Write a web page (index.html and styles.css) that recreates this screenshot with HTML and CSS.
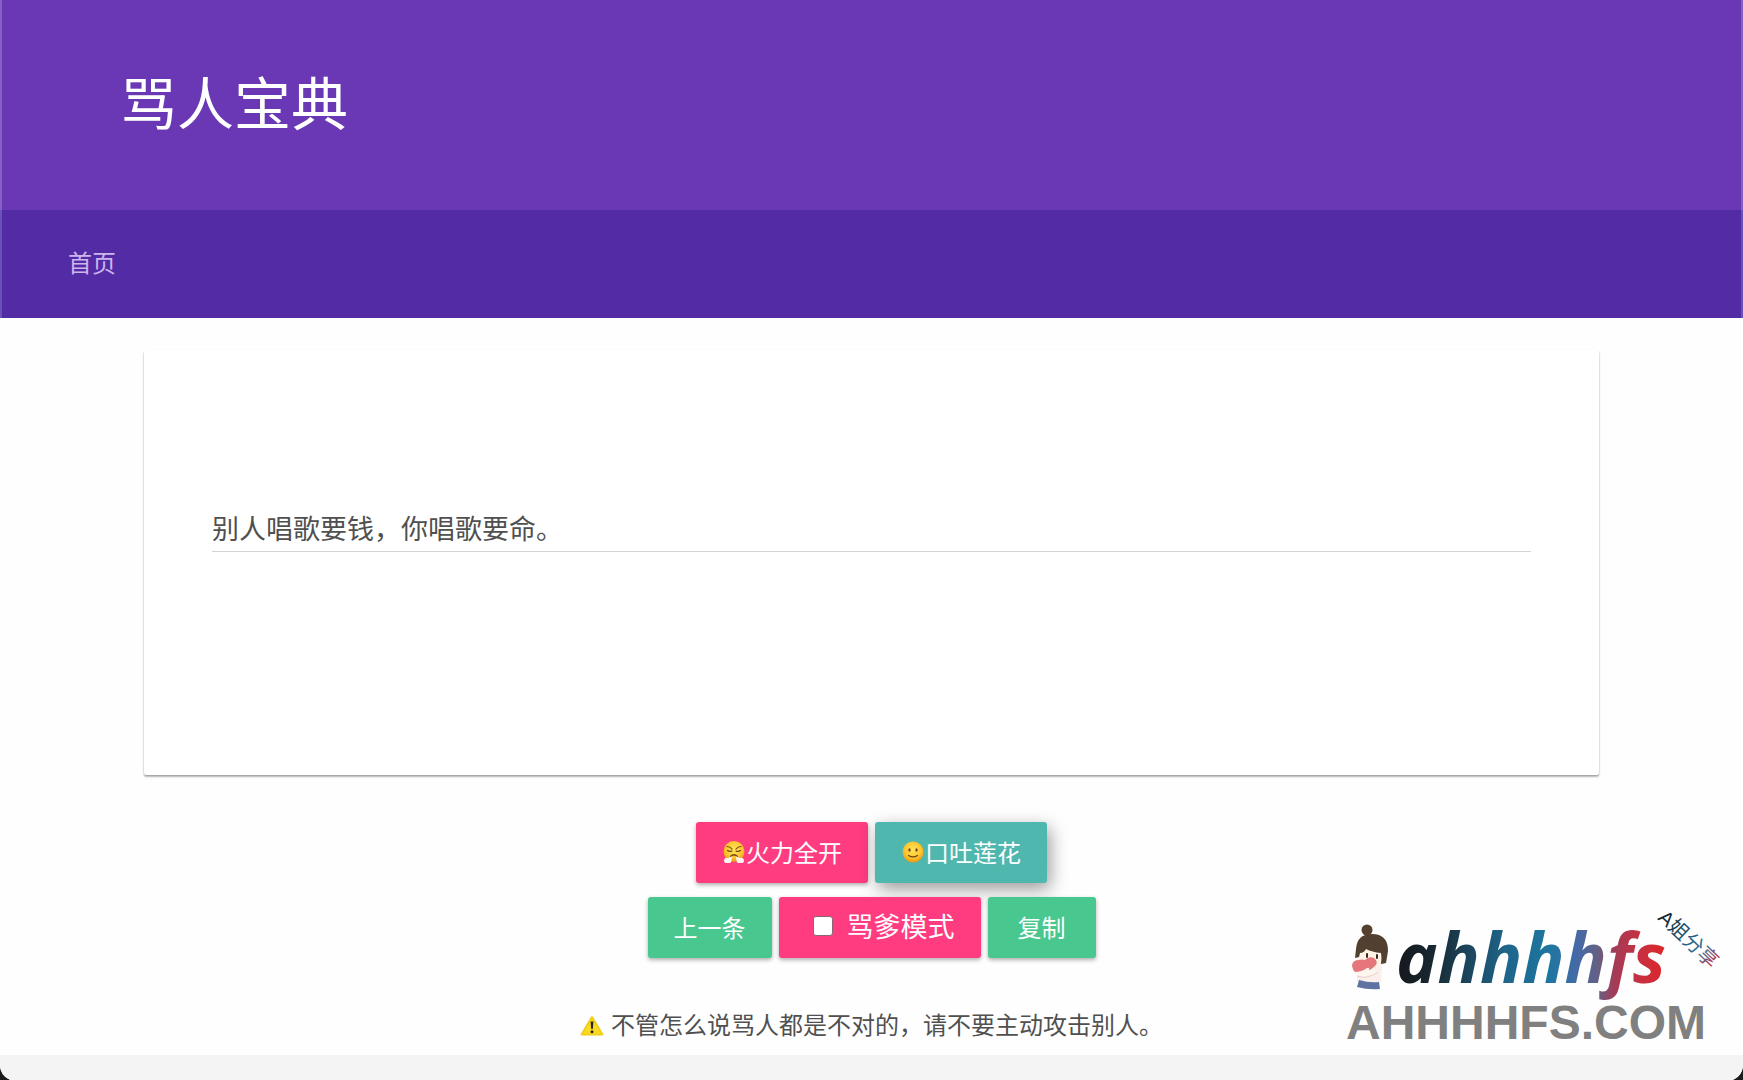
FILE: index.html
```html
<!DOCTYPE html>
<html lang="zh-CN">
<head>
<meta charset="utf-8">
<meta name="viewport" content="width=device-width, initial-scale=1">
<title>骂人宝典</title>
<link rel="stylesheet" href="styles.css">
</head>
<body>
<div class="window">
  <header class="banner">
    <h1 class="banner-title">骂人宝典</h1>
  </header>
  <nav class="nav">
    <a class="nav-link" href="#">首页</a>
  </nav>
  <main class="main">
    <section class="card">
      <input class="sentence" type="text" aria-label="句子" value="别人唱歌要钱，你唱歌要命。" readonly>
    </section>
    <div class="actions">
      <div class="row">
        <button class="btn btn-pink" type="button">
          <svg class="emoji" viewBox="0 0 24 24" aria-hidden="true">
            <defs><radialGradient id="face" cx=".5" cy=".4" r=".6"><stop offset="0" stop-color="#ffe45a"/><stop offset=".65" stop-color="#fcc630"/><stop offset="1" stop-color="#ee9410"/></radialGradient></defs>
            <circle cx="12" cy="11.5" r="10.5" fill="url(#face)"/>
            <path d="M5 6.5q3 0 5 2.500M19 6.500q-3 0-5 2.500M5.500 10.500q2 1.600 4.500.500M18.500 10.500q-2 1.600-4.500.500M8.500 16.500q3.500-3.500 7 0" fill="none" stroke="#714313" stroke-width="1.200" stroke-linecap="round"/>
            <path d="M10 16.500q-2 0-3.500 1.500-4-1-4.500 2.500 0 3 3.500 2.500 4 .5 4-2.500zM14 16.500q2 0 3.500 1.500 4-1 4.500 2.500 0 3-3.500 2.500-4 .5-4-2.500z" fill="#fff4f2"/>
          </svg>火力全开</button>
        <button class="btn btn-teal" type="button">
          <svg class="emoji" viewBox="0 0 24 24" aria-hidden="true">
            <circle cx="12" cy="12" r="10.500" fill="url(#face)"/>
            <ellipse cx="8.500" cy="10" rx="1.200" ry="1.700" fill="#714313"/>
            <ellipse cx="15.500" cy="10" rx="1.200" ry="1.700" fill="#714313"/>
            <path d="M7.500 15.500q4.500 2.800 9 0" fill="none" stroke="#714313" stroke-width="1.300" stroke-linecap="round"/>
          </svg>口吐莲花</button>
      </div>
      <div class="row">
        <button class="btn btn-green" type="button">上一条</button>
        <label class="btn btn-pink btn-mode"><input class="check" type="checkbox">骂爹模式</label>
        <button class="btn btn-green" type="button">复制</button>
      </div>
    </div>
    <p class="notice">
      <svg class="warn" viewBox="0 0 24 24" aria-hidden="true">
        <path d="M12 3 22.500 20.500H1.500z" fill="#fadb22" stroke="#f0cf1c" stroke-width="2" stroke-linejoin="round"/>
        <path d="M10.600 7.500h2.800l-.6 7.500h-1.600z" fill="#29241a"/>
        <circle cx="12" cy="17.800" r="1.500" fill="#29241a"/>
      </svg>不管怎么说骂人都是不对的，请不要主动攻击别人。</p>
  </main>
  <footer class="footer"></footer>
  <svg class="brand" viewBox="0 0 390 150" role="img" aria-label="ahhhhfs A姐分享">
    <defs>
      <linearGradient id="ink" gradientUnits="userSpaceOnUse" x1="58" y1="0" x2="325" y2="0">
        <stop offset="0" stop-color="#14181d"/><stop offset=".12" stop-color="#18262f"/>
        <stop offset=".24" stop-color="#1b4054"/><stop offset=".4" stop-color="#1f6489"/>
        <stop offset=".56" stop-color="#1c76a0"/><stop offset=".68" stop-color="#4869a5"/>
        <stop offset=".75" stop-color="#665f82"/><stop offset=".81" stop-color="#a43b56"/>
        <stop offset=".9" stop-color="#c53143"/><stop offset="1" stop-color="#df2528"/>
      </linearGradient>
      <linearGradient id="tag" x1="0" x2="1"><stop offset="0" stop-color="#141e25"/><stop offset=".5" stop-color="#216080"/><stop offset=".75" stop-color="#377297"/><stop offset="1" stop-color="#c52e3c"/></linearGradient>
    </defs>
    <g>
      <circle cx="27" cy="29" r="5.500" fill="#55402d"/>
      <path d="M17 48q0-14 15-14 15 0 15 15l-2 13q-2 3-5 2H20q-5-6-3-16z" fill="#fff1e4"/>
      <path d="M16 48q1-15 16-15 16 0 16 17l-2 12-5 1q1-6 0-11-9-1-15-4-2 4-6 4l-1 4-4 1z" fill="#514030"/>
      <path d="M27 53v3M37 54v3" stroke="#332820" stroke-width="2" stroke-linecap="round"/>
      <path d="M17 64q15-5 25 2l-1 15H17z" fill="#fbefec"/>
      <path d="M17 73q-5-4-5-9 1-5 7-5 3-1 6 0 4-4 9-2 5 4 1 8-6 6-18 8z" fill="#e4767c"/>
      <path d="M14 71q8 0 13-4 3-1 2 2l9 1q-4 7-14 7-8-1-10-6z" fill="#fff5ef"/>
      <path d="M17 75q10 4 21-4" fill="none" stroke="#e9cec7"/>
      <path d="M19 79q10 3 20 2l1 7q-12 1-23-2z" fill="#5e73a2"/>
    </g>
    <text class="brand-script" x="56" y="82">ahhhhfs</text>
    <text class="brand-domain" x="6" y="138">AHHHHFS.COM</text>
    <text class="brand-tag" transform="translate(317 18) rotate(43)">A姐分享</text>
  </svg>
</div>
</body>
</html>
```

FILE: styles.css
```css
* {
  box-sizing: border-box;
}

body {
  margin: 0;
  background: #1c1c1c;
  color: #505050;
  font-family: "Liberation Sans", "Noto Sans CJK SC", sans-serif;
  font-size: 24px;
}

.window {
  position: relative;
  display: flex;
  flex-direction: column;
  min-height: 100vh;
  overflow: hidden;
  background: #fefefe;
  border-radius: 0 0 16px 16px;
}

.banner {
  padding: 65px 118px;
  background: #6a38b5;
  border: solid #8760c5;
  border-width: 0 2px;
}

.banner-title {
  margin: 0;
  color: #fff;
  font-size: 57px;
  font-weight: 400;
  line-height: 80px;
}

.nav {
  display: flex;
  padding: 0 66px;
  background: #532ca5;
  border: solid #6b50b5;
  border-width: 0 2px;
}

.nav-link {
  color: #cdb5ee;
  font-size: 24px;
  line-height: 108px;
  text-decoration: none;
}

.main {
  display: flex;
  flex: 1;
  flex-direction: column;
}

.card {
  margin: 32px 144px 0;
  padding: 148px 68px 223px;
  background: #fff;
  border-radius: 2px;
  box-shadow: 0 2px 2px rgba(0, 0, 0, .24), 0 1px 2px rgba(0, 0, 0, .2);
}

.sentence {
  display: block;
  width: 100%;
  height: 54px;
  padding: 6px 0 0;
  background: transparent;
  border: 0;
  border-bottom: 1px solid #d4d4d4;
  outline: 0;
  color: #505050;
  font-family: inherit;
  font-size: 27px;
}

.actions {
  display: flex;
  flex-direction: column;
  gap: 14px;
  margin-top: 47px;
}

.row {
  display: flex;
  justify-content: center;
  gap: 7px;
}

.btn {
  display: flex;
  align-items: center;
  justify-content: center;
  min-width: 108px;
  height: 61px;
  padding: 0 26px 2px;
  border: 0;
  border-radius: 3px;
  box-shadow: 0 2px 4px rgba(0, 0, 0, .32);
  color: #fff;
  font-family: inherit;
  font-size: 24px;
  font-weight: 400;
  cursor: pointer;
}

.btn-pink {
  background: #ff3c80;
}

.btn-teal {
  background: #50b7ae;
  box-shadow: 3px 6px 18px rgba(0, 0, 0, .4);
}

.btn-green {
  position: relative;
  background: #48c78f;
}

.btn-mode {
  position: relative;
  gap: 14px;
  padding-bottom: 4px;
  padding-left: 34px;
  font-size: 27px;
}

.check {
  width: 20px;
  height: 20px;
  margin: 0;
  appearance: none;
  background: #fff;
  border: 1px solid #8c6673;
  border-radius: 3px;
}

.emoji {
  flex: none;
  width: 24px;
  height: 24px;
}

.notice {
  display: flex;
  align-items: center;
  justify-content: center;
  gap: 7px;
  margin: 48px 0 9px;
  line-height: 40px;
}

.warn {
  width: 24px;
  height: 24px;
}

.footer {
  height: 26px;
  background: #f4f4f4;
}

/* Site mark laid over the lower right corner */
.brand {
  position: absolute;
  right: 13px;
  bottom: 30px;
  width: 390px;
  height: 150px;
}

.brand-script {
  fill: url(#ink);
  font-family: "Open Sans", sans-serif;
  font-size: 70px;
  font-style: italic;
  font-weight: 700;
}

.brand-domain {
  fill: #808080;
  font-family: "Liberation Sans", sans-serif;
  font-size: 48px;
  font-weight: 700;
}

.brand-tag {
  fill: url(#tag);
  font-family: "Liberation Sans", "Noto Sans CJK SC", sans-serif;
  font-size: 20px;
}
```
